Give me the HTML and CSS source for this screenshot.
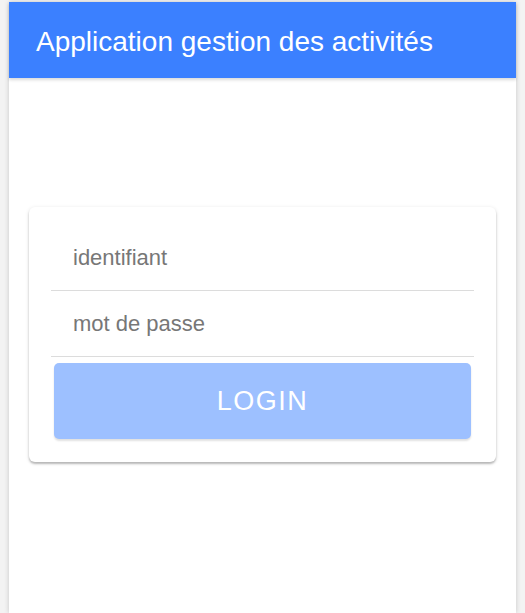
FILE: index.html
```html
<!DOCTYPE html>
<html lang="fr">
<head>
<meta charset="utf-8">
<title>Application gestion des activités</title>
<link rel="stylesheet" href="styles.css">
</head>
<body>
<div class="page">
  <header class="topbar">
    <h1 class="title">Application gestion des activités</h1>
  </header>
  <main class="content">
    <form class="card">
      <input class="field" type="text" placeholder="identifiant">
      <input class="field" type="password" placeholder="mot de passe">
      <button class="login" type="button">LOGIN</button>
    </form>
  </main>
</div>
</body>
</html>
```
FILE: styles.css
```css
html, body {
  margin: 0;
  padding: 0;
  height: 100%;
}
body {
  background: #f3f3f3;
  font-family: "Liberation Sans", Arial, sans-serif;
  overflow: hidden;
}
.page {
  margin: 2px 9px 0 9px;
  height: calc(100% - 2px);
  background: #ffffff;
  box-shadow: 0 0 5px rgba(0, 0, 0, 0.18);
}
.topbar {
  background: #3b80ff;
  height: 76px;
  box-sizing: border-box;
  padding: 24px 27px 0 27px;
  box-shadow: 0 2px 3px rgba(0, 0, 0, 0.15);
  position: relative;
}
.title {
  margin: 0;
  font-size: 28px;
  line-height: 32px;
  font-weight: normal;
  color: #ffffff;
}
.content {
  padding: 129px 20px 0 20px;
}
.card {
  display: flex;
  flex-direction: column;
  background: #ffffff;
  border-radius: 6px;
  padding: 18px 22px 23px 22px;
  box-shadow: 0 1px 4px rgba(0, 0, 0, 0.12), 0 2px 2px rgba(0, 0, 0, 0.22);
  margin: 0;
}
.field {
  height: 66px;
  box-sizing: border-box;
  border: none;
  border-bottom: 1px solid #dcdcdc;
  padding: 0 22px;
  font-family: "Liberation Sans", Arial, sans-serif;
  font-size: 22px;
  color: #333;
  outline: none;
  background: transparent;
}
.field::placeholder {
  color: #777777;
  opacity: 1;
}
.login {
  margin: 6px 3px 0 3px;
  height: 76px;
  border: none;
  border-radius: 5px;
  background: #9dc0ff;
  color: #ffffff;
  font-family: "Liberation Sans", Arial, sans-serif;
  font-size: 27px;
  letter-spacing: 1.5px;
  box-shadow: 0 2px 2px rgba(0, 0, 0, 0.12);
}
```
